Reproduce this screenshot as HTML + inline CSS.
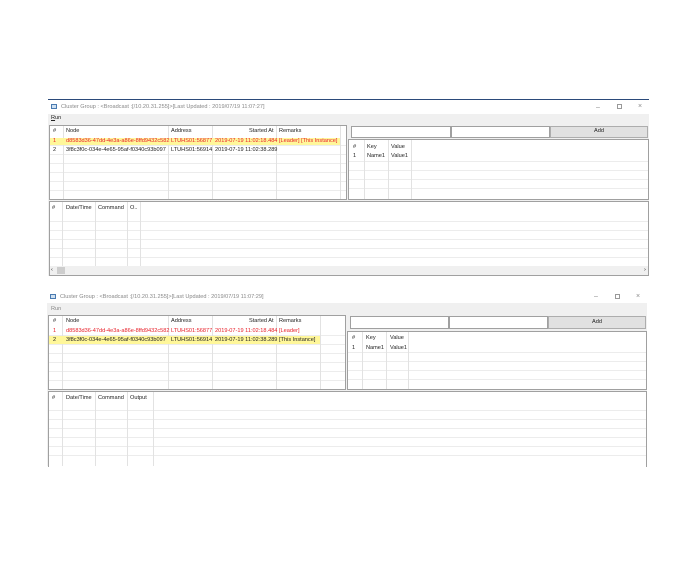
<!DOCTYPE html>
<html><head><style>
*{margin:0;padding:0;box-sizing:border-box}
body{width:696px;height:564px;background:#fff;position:relative;overflow:hidden;font-family:"Liberation Sans",sans-serif;font-size:5.6px;color:#222}
div{position:absolute}
.t{white-space:nowrap;line-height:1}
.bx{border:1px solid #a0a0a0;background:#fff}
.hl{height:1px;background:#ececec}
.vl{width:1px;background:#e2e2e2}
.gray{color:#888}
.red{color:#e8202a}
</style></head><body>

<!-- Window 1 -->
<div style="left:48px;top:99px;width:601px;height:1px;background:#2b4a7a"></div>
<div style="left:48px;top:100px;width:601px;height:176px;background:#f0f0f0"></div>
<div style="left:48px;top:100px;width:601px;height:14px;background:#fff"></div>
<div style="left:51px;top:104px;width:6px;height:5px;border:1px solid #4a7ab0;background:#cfe0f0"></div>
<div class="t gray" style="left:61px;top:105px">Cluster Group : &lt;Broadcast :[/10.20.31.255]&gt;[Last Updated : 2019/07/19 11:07:27]</div>
<div class="t gray" style="left:596px;top:104px;font-size:7px">–</div>
<div style="left:617px;top:104px;width:5px;height:5px;border:1px solid #999"></div>
<div class="t gray" style="left:638px;top:103px;font-size:7px">×</div>
<div class="t" style="left:51px;top:116px"><u>R</u>un</div>

<div class="bx" style="left:49px;top:125px;width:298px;height:75px"></div>
<div class="hl" style="left:50px;top:145px;width:296px"></div>
<div class="hl" style="left:50px;top:154px;width:296px"></div>
<div class="hl" style="left:50px;top:163px;width:296px"></div>
<div class="hl" style="left:50px;top:172px;width:296px"></div>
<div class="hl" style="left:50px;top:181px;width:296px"></div>
<div class="hl" style="left:50px;top:190px;width:296px"></div>
<div class="vl" style="left:63px;top:126px;height:73px"></div>
<div class="vl" style="left:168px;top:126px;height:73px"></div>
<div class="vl" style="left:212px;top:126px;height:73px"></div>
<div class="vl" style="left:276px;top:126px;height:73px"></div>
<div class="vl" style="left:340px;top:126px;height:73px"></div>
<div style="left:50px;top:138px;width:290px;height:7px;background:#fff79a"></div>
<div class="t" style="left:53px;top:129px">#</div>
<div class="t" style="left:66px;top:129px">Node</div>
<div class="t" style="left:171px;top:129px">Address</div>
<div class="t" style="left:249px;top:129px">Started At</div>
<div class="t" style="left:279px;top:129px">Remarks</div>
<div class="t red" style="left:53px;top:139px">1</div>
<div class="t red" style="left:66px;top:139px">d8583d36-47dd-4e3a-a86e-8ffd9432c582</div>
<div class="t red" style="left:171px;top:139px">LTUHS01:56877</div>
<div class="t red" style="left:215px;top:139px">2019-07-19 11:02:18.484</div>
<div class="t red" style="left:279px;top:139px">[Leader] [This Instance]</div>
<div class="t" style="left:53px;top:148px">2</div>
<div class="t" style="left:66px;top:148px">3f8c3f0c-034e-4e65-95af-f0340c93b097</div>
<div class="t" style="left:171px;top:148px">LTUHS01:56914</div>
<div class="t" style="left:215px;top:148px">2019-07-19 11:02:38.289</div>

<div class="bx" style="left:351px;top:126px;width:100px;height:12px"></div>
<div class="bx" style="left:451px;top:126px;width:99px;height:12px"></div>
<div style="left:550px;top:126px;width:98px;height:12px;background:#e1e1e1;border:1px solid #adadad"></div>
<div class="t" style="left:594px;top:129px">Add</div>
<div class="bx" style="left:348px;top:139px;width:301px;height:61px"></div>
<div class="hl" style="left:349px;top:161px;width:299px"></div>
<div class="hl" style="left:349px;top:170px;width:299px"></div>
<div class="hl" style="left:349px;top:179px;width:299px"></div>
<div class="hl" style="left:349px;top:188px;width:299px"></div>
<div class="vl" style="left:364px;top:140px;height:59px"></div>
<div class="vl" style="left:388px;top:140px;height:59px"></div>
<div class="vl" style="left:411px;top:140px;height:59px"></div>
<div class="t" style="left:353px;top:145px">#</div>
<div class="t" style="left:367px;top:145px">Key</div>
<div class="t" style="left:391px;top:145px">Value</div>
<div class="t" style="left:353px;top:154px">1</div>
<div class="t" style="left:367px;top:154px">Name1</div>
<div class="t" style="left:391px;top:154px">Value1</div>

<div class="bx" style="left:49px;top:201px;width:600px;height:75px"></div>
<div class="hl" style="left:50px;top:221px;width:598px"></div>
<div class="hl" style="left:50px;top:230px;width:598px"></div>
<div class="hl" style="left:50px;top:239px;width:598px"></div>
<div class="hl" style="left:50px;top:248px;width:598px"></div>
<div class="hl" style="left:50px;top:257px;width:598px"></div>
<div class="vl" style="left:62px;top:202px;height:64px"></div>
<div class="vl" style="left:95px;top:202px;height:64px"></div>
<div class="vl" style="left:127px;top:202px;height:64px"></div>
<div class="vl" style="left:140px;top:202px;height:64px"></div>
<div class="t" style="left:52px;top:206px">#</div>
<div class="t" style="left:66px;top:206px">Date/Time</div>
<div class="t" style="left:98px;top:206px">Command</div>
<div class="t" style="left:130px;top:206px">O..</div>
<div style="left:50px;top:266px;width:598px;height:9px;background:#f0f0f0"></div>
<div style="left:57px;top:267px;width:8px;height:7px;background:#cdcdcd"></div>
<div class="t" style="left:51px;top:268px">‹</div>
<div class="t" style="left:644px;top:268px">›</div>

<!-- Window 2 -->
<div style="left:47px;top:290px;width:600px;height:176px;background:#f0f0f0"></div>
<div style="left:47px;top:290px;width:600px;height:13px;background:#fff"></div>
<div style="left:50px;top:294px;width:6px;height:5px;border:1px solid #4a7ab0;background:#cfe0f0"></div>
<div class="t gray" style="left:60px;top:295px">Cluster Group : &lt;Broadcast :[/10.20.31.255]&gt;[Last Updated : 2019/07/19 11:07:29]</div>
<div class="t gray" style="left:594px;top:293px;font-size:7px">–</div>
<div style="left:615px;top:294px;width:5px;height:5px;border:1px solid #999"></div>
<div class="t gray" style="left:636px;top:293px;font-size:7px">×</div>
<div class="t gray" style="left:51px;top:307px">Run</div>

<div class="bx" style="left:48px;top:315px;width:298px;height:75px"></div>
<div class="hl" style="left:49px;top:335px;width:296px"></div>
<div class="hl" style="left:49px;top:344px;width:296px"></div>
<div class="hl" style="left:49px;top:353px;width:296px"></div>
<div class="hl" style="left:49px;top:362px;width:296px"></div>
<div class="hl" style="left:49px;top:371px;width:296px"></div>
<div class="hl" style="left:49px;top:380px;width:296px"></div>
<div class="vl" style="left:62px;top:316px;height:73px"></div>
<div class="vl" style="left:168px;top:316px;height:73px"></div>
<div class="vl" style="left:212px;top:316px;height:73px"></div>
<div class="vl" style="left:276px;top:316px;height:73px"></div>
<div class="vl" style="left:320px;top:316px;height:73px"></div>
<div style="left:49px;top:336px;width:271px;height:8px;background:#fff79a"></div>
<div class="t" style="left:53px;top:319px">#</div>
<div class="t" style="left:66px;top:319px">Node</div>
<div class="t" style="left:171px;top:319px">Address</div>
<div class="t" style="left:249px;top:319px">Started At</div>
<div class="t" style="left:279px;top:319px">Remarks</div>
<div class="t red" style="left:53px;top:329px">1</div>
<div class="t red" style="left:66px;top:329px">d8583d36-47dd-4e3a-a86e-8ffd9432c582</div>
<div class="t red" style="left:171px;top:329px">LTUHS01:56877</div>
<div class="t red" style="left:215px;top:329px">2019-07-19 11:02:18.484</div>
<div class="t red" style="left:279px;top:329px">[Leader]</div>
<div class="t" style="left:53px;top:338px">2</div>
<div class="t" style="left:66px;top:338px">3f8c3f0c-034e-4e65-95af-f0340c93b097</div>
<div class="t" style="left:171px;top:338px">LTUHS01:56914</div>
<div class="t" style="left:215px;top:338px">2019-07-19 11:02:38.289</div>
<div class="t" style="left:279px;top:338px">[This Instance]</div>

<div class="bx" style="left:350px;top:316px;width:99px;height:13px"></div>
<div class="bx" style="left:449px;top:316px;width:99px;height:13px"></div>
<div style="left:548px;top:316px;width:98px;height:13px;background:#e1e1e1;border:1px solid #adadad"></div>
<div class="t" style="left:592px;top:320px">Add</div>
<div class="bx" style="left:347px;top:331px;width:300px;height:59px"></div>
<div class="hl" style="left:348px;top:352px;width:298px"></div>
<div class="hl" style="left:348px;top:361px;width:298px"></div>
<div class="hl" style="left:348px;top:370px;width:298px"></div>
<div class="hl" style="left:348px;top:379px;width:298px"></div>
<div class="vl" style="left:362px;top:332px;height:57px"></div>
<div class="vl" style="left:386px;top:332px;height:57px"></div>
<div class="vl" style="left:408px;top:332px;height:57px"></div>
<div class="t" style="left:352px;top:336px">#</div>
<div class="t" style="left:366px;top:336px">Key</div>
<div class="t" style="left:390px;top:336px">Value</div>
<div class="t" style="left:352px;top:346px">1</div>
<div class="t" style="left:366px;top:346px">Name1</div>
<div class="t" style="left:390px;top:346px">Value1</div>

<div class="bx" style="left:48px;top:391px;width:599px;height:76px;border-bottom:none"></div>
<div class="hl" style="left:49px;top:410px;width:597px"></div>
<div class="hl" style="left:49px;top:419px;width:597px"></div>
<div class="hl" style="left:49px;top:428px;width:597px"></div>
<div class="hl" style="left:49px;top:437px;width:597px"></div>
<div class="hl" style="left:49px;top:446px;width:597px"></div>
<div class="hl" style="left:49px;top:455px;width:597px"></div>
<div class="vl" style="left:62px;top:392px;height:74px"></div>
<div class="vl" style="left:95px;top:392px;height:74px"></div>
<div class="vl" style="left:127px;top:392px;height:74px"></div>
<div class="vl" style="left:153px;top:392px;height:74px"></div>
<div class="t" style="left:52px;top:396px">#</div>
<div class="t" style="left:66px;top:396px">Date/Time</div>
<div class="t" style="left:98px;top:396px">Command</div>
<div class="t" style="left:130px;top:396px">Output</div>
</body></html>
